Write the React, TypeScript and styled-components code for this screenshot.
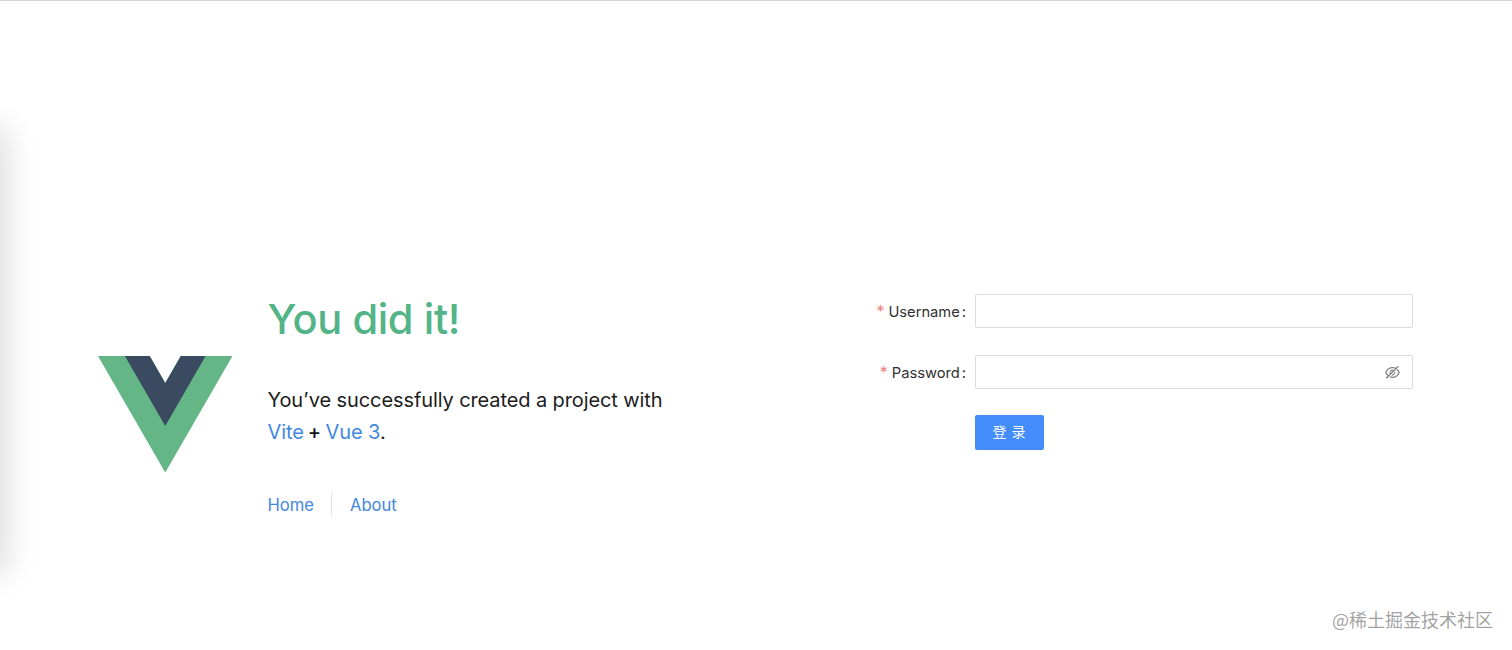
import React from "react";
import styled, { createGlobalStyle } from "styled-components";
import { AiOutlineEyeInvisible } from "react-icons/ai";

const Global = createGlobalStyle`
  html, body { margin: 0; padding: 0; background: #fff; }
  body { font-family: Inter, "Liberation Sans", "Noto Sans CJK SC", sans-serif; overflow: hidden; }
`;

const Page = styled.div`
  position: relative;
  box-sizing: border-box;
  width: 1512px;
  height: 650px;
  overflow: hidden;
  border-top: 1px solid #d4d4d4;
  padding: 293px 99px 0 98px;
  display: grid;
  grid-template-columns: 658px 1fr;
  align-items: start;
`;

const EdgeShadow = styled.div`
  position: absolute;
  left: -30px;
  top: 135px;
  width: 30px;
  height: 430px;
  box-shadow: 0 0 30px 8px rgba(0, 0, 0, 0.13);
`;

const Hero = styled.header`
  display: flex;
  align-items: center;
  gap: 35px;
`;

const Logo = styled.svg`
  width: 134.5px;
  height: 116.5px;
  flex: none;
  margin-top: 17px;
`;

const HeroText = styled.div`
  display: flex;
  flex-direction: column;
`;

const Title = styled.h1`
  margin: 0;
  color: #53b487;
  font-size: 41.6px;
  line-height: 50px;
  font-weight: 450;
  letter-spacing: -0.4px;
`;

const Lead = styled.p`
  margin: 40px 0 0;
  color: #1c1c1c;
  font-size: 20px;
  line-height: 32px;
  font-weight: 400;
  letter-spacing: -0.1px;
`;

const Link = styled.a`
  color: #3f87e0;
`;

const Plus = styled.span`
  margin: 0 -1px 0 -1.5px;
  color: #111;
  font-weight: 500;
`;

const Nav = styled.nav`
  display: flex;
  margin-top: 45px;
  font-size: 16.6px;
  line-height: 24px;
`;

const NavLink = styled.a<{ $divided?: boolean }>`
  color: #3f87e0;
  padding: 0 17px 0 ${(p) => (p.$divided ? "18px" : "0")};
  border-left: ${(p) => (p.$divided ? "1px solid #e6e6e6" : "none")};
`;

const Form = styled.form`
  display: flex;
  flex-direction: column;
  gap: 27px;
`;

const Row = styled.div`
  display: flex;
  align-items: center;
  gap: 9px;
`;

const Label = styled.label`
  width: 210px;
  flex: none;
  text-align: right;
  font-size: 14.7px;
  color: #303133;
`;

const Star = styled.span`
  color: #f08080;
  font-size: 16px;
  margin-right: 4px;
`;

const Colon = styled.span`
  margin-left: 2px;
`;

const InputBox = styled.div`
  box-sizing: border-box;
  flex: 1;
  height: 34px;
  border: 1px solid #dcdcdc;
  border-radius: 2px;
  background: #fff;
  display: flex;
  align-items: center;
  justify-content: flex-end;
  padding-right: 11px;
  color: #808080;
`;

const Submit = styled.button`
  box-sizing: border-box;
  margin: -1px 0 0 219px;
  width: 69px;
  height: 35px;
  border: none;
  border-radius: 2px;
  background: #438cfa;
  color: #fff;
  font-size: 14px;
  letter-spacing: 1px;
  font-family: "Noto Sans CJK SC", sans-serif;
  padding: 0 0 3px 0;
`;

const Watermark = styled.div`
  position: absolute;
  right: 19px;
  top: 607px;
  font-family: "Noto Sans CJK SC", sans-serif;
  font-size: 18px;
  line-height: 22px;
  color: rgba(130, 130, 130, 0.75);
`;

export default function App() {
  return (
    <Page>
      <Global />
      <EdgeShadow />
      <Hero>
        <Logo viewBox="0 0 261.76 226.69" aria-label="Vue logo">
          <path fill="#64b687" d="M161.096.001l-30.225 52.351L100.647.001H-.005l130.877 226.688L261.749.001z" />
          <path fill="#3a4a60" d="M161.096.001l-30.225 52.351L100.647.001H52.346l78.526 136.01L209.398.001z" />
        </Logo>
        <HeroText>
          <Title>You did it!</Title>
          <Lead>
            You’ve successfully created a project with
            <br />
            <Link>Vite</Link> <Plus>+</Plus> <Link>Vue 3</Link>.
          </Lead>
          <Nav>
            <NavLink>Home</NavLink>
            <NavLink $divided>About</NavLink>
          </Nav>
        </HeroText>
      </Hero>
      <Form>
        <Row>
          <Label><Star>*</Star>Username<Colon>:</Colon></Label>
          <InputBox />
        </Row>
        <Row>
          <Label><Star>*</Star>Password<Colon>:</Colon></Label>
          <InputBox><AiOutlineEyeInvisible size={17} /></InputBox>
        </Row>
        <Submit type="button">登 录</Submit>
      </Form>
      <Watermark>@稀土掘金技术社区</Watermark>
    </Page>
  );
}
